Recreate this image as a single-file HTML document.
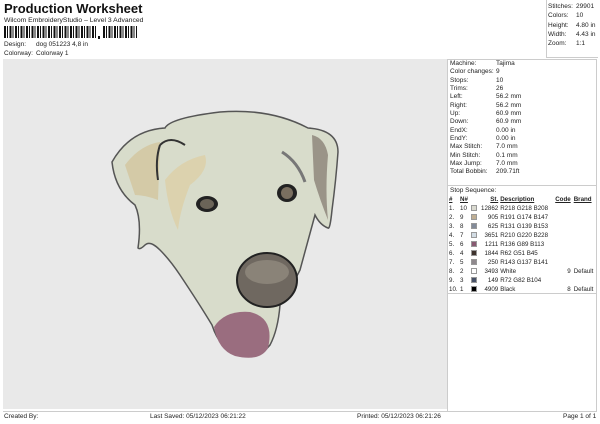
<!DOCTYPE html>
<html><head><style>
*{margin:0;padding:0;box-sizing:border-box}
body{width:600px;height:424px;background:#fff;font-family:"Liberation Sans",Arial,sans-serif;color:#222;position:relative;overflow:hidden;font-size:6.5px}
.a{position:absolute;white-space:nowrap}
.t td{font-size:6.2px;padding:0;height:9px;white-space:nowrap}
.sw{display:inline-block;width:6px;height:6px;border:1px solid #999;vertical-align:middle}
</style></head><body>
<div class="a" style="left:4px;top:1px;font-size:13px;font-weight:bold;color:#111">Production Worksheet</div>
<div class="a" style="left:4px;top:17px;font-size:6.8px">Wilcom EmbroideryStudio – Level 3 Advanced</div>
<div class="a" style="left:4px;top:26px;width:133px;height:12px;background:repeating-linear-gradient(90deg,#111 0 2px,#fff 2px 3px,#111 3px 4px,#fff 4px 5.5px)"></div>
<div class="a" style="left:96px;top:26px;width:6px;height:12px;background:#fff"></div>
<div class="a" style="left:98px;top:36px;width:1.5px;height:3px;background:#111"></div>
<div class="a" style="left:4px;top:41px">Design:</div><div class="a" style="left:36px;top:41px">dog 051223 4,8 in</div>
<div class="a" style="left:4px;top:50px">Colorway:</div><div class="a" style="left:36px;top:50px">Colorway 1</div>
<div class="a" style="left:546px;top:0;width:52px;height:58px;border-left:1px solid #ccc;border-bottom:1px solid #ccc"></div>
<div class="a" style="left:548px;top:2px;line-height:9.3px">Stitches:<br>Colors:<br>Height:<br>Width:<br>Zoom:</div>
<div class="a" style="left:576px;top:2px;line-height:9.3px">29901<br>10<br>4.80 in<br>4.43 in<br>1:1</div>
<div class="a" style="left:3px;top:59px;width:444px;height:350px;background:#e9e9e9"></div>
<div class="a" style="left:447px;top:59px;width:150px;height:353px;border:1px solid #ccc"></div>
<div class="a" style="left:447px;top:185px;width:150px;border-top:1px solid #ccc"></div>
<div class="a" style="left:447px;top:293px;width:150px;border-top:1px solid #ccc"></div>
<div class="a" style="left:450px;top:60px;line-height:8.35px">Machine:<br>Color changes:<br>Stops:<br>Trims:<br>Left:<br>Right:<br>Up:<br>Down:<br>EndX:<br>EndY:<br>Max Stitch:<br>Min Stitch:<br>Max Jump:<br>Total Bobbin:</div>
<div class="a" style="left:496px;top:60px;line-height:8.35px">Tajima<br>9<br>10<br>26<br>56.2 mm<br>56.2 mm<br>60.9 mm<br>60.9 mm<br>0.00 in<br>0.00 in<br>7.0 mm<br>0.1 mm<br>7.0 mm<br>209.71ft</div>
<div class="a" style="left:450px;top:187px">Stop Sequence:</div>
<table class="a t" style="left:449px;top:195px;border-collapse:collapse">
<tr style="font-weight:bold;text-decoration:underline"><td style="width:11px">#</td><td style="width:11px">N#</td><td style="width:10px"></td><td style="width:16px;text-align:right;padding-right:2px">St.</td><td style="width:55px">Description</td><td style="width:18px;text-align:right;padding-right:3px">Code</td><td>Brand</td></tr>
<tr><td>1.</td><td>10</td><td><i class="sw" style="background:#dadad0"></i></td><td style="text-align:right;padding-right:2px">12862</td><td>R218 G218 B208</td><td></td><td></td></tr>
<tr><td>2.</td><td>9</td><td><i class="sw" style="background:#bfae93"></i></td><td style="text-align:right;padding-right:2px">905</td><td>R191 G174 B147</td><td></td><td></td></tr>
<tr><td>3.</td><td>8</td><td><i class="sw" style="background:#838b99"></i></td><td style="text-align:right;padding-right:2px">625</td><td>R131 G139 B153</td><td></td><td></td></tr>
<tr><td>4.</td><td>7</td><td><i class="sw" style="background:#d2dce4"></i></td><td style="text-align:right;padding-right:2px">3651</td><td>R210 G220 B228</td><td></td><td></td></tr>
<tr><td>5.</td><td>6</td><td><i class="sw" style="background:#885971"></i></td><td style="text-align:right;padding-right:2px">1211</td><td>R136 G89 B113</td><td></td><td></td></tr>
<tr><td>6.</td><td>4</td><td><i class="sw" style="background:#3e332d"></i></td><td style="text-align:right;padding-right:2px">1844</td><td>R62 G51 B45</td><td></td><td></td></tr>
<tr><td>7.</td><td>5</td><td><i class="sw" style="background:#8f898d"></i></td><td style="text-align:right;padding-right:2px">250</td><td>R143 G137 B141</td><td></td><td></td></tr>
<tr><td>8.</td><td>2</td><td><i class="sw" style="background:#fff"></i></td><td style="text-align:right;padding-right:2px">3493</td><td>White</td><td style="text-align:right;padding-right:3px">9</td><td>Default</td></tr>
<tr><td>9.</td><td>3</td><td><i class="sw" style="background:#485268"></i></td><td style="text-align:right;padding-right:2px">149</td><td>R72 G82 B104</td><td></td><td></td></tr>
<tr><td>10.</td><td>1</td><td><i class="sw" style="background:#000"></i></td><td style="text-align:right;padding-right:2px">4909</td><td>Black</td><td style="text-align:right;padding-right:3px">8</td><td>Default</td></tr>
</table>
<div class="a" style="left:3px;top:411px;width:594px;border-top:1px solid #ccc"></div>
<div class="a" style="left:4px;top:413px;font-size:6.5px">Created By:</div>
<div class="a" style="left:150px;top:413px;font-size:6.5px">Last Saved: 05/12/2023 06:21:22</div>
<div class="a" style="left:357px;top:413px;font-size:6.5px">Printed: 05/12/2023 06:21:26</div>
<div class="a" style="left:563px;top:413px;font-size:6.5px">Page 1 of 1</div>
<svg class="a" style="left:100px;top:100px" width="250" height="270" viewBox="0 0 250 270">
<path d="M12 62 Q30 30 65 28 Q70 18 120 12 Q170 8 208 28 Q238 30 238 52 Q236 80 232 110 Q230 130 228 128 Q220 125 215 115 L200 170 Q190 190 180 205 Q178 230 170 245 Q160 258 140 256 Q120 250 112 225 Q100 205 80 175 Q70 160 60 150 Q50 140 45 145 Q40 150 38 148 Q42 120 35 105 Q15 90 12 62Z" fill="#d8dccb" stroke="#555" stroke-width="1.5"/>
<path d="M25 65 Q40 45 60 42 L58 100 Q45 95 35 95 Z" fill="#d4caa7"/>
<path d="M65 80 Q80 60 105 55 Q110 70 90 85 Q80 110 78 130 Q68 110 65 80Z" fill="#dcd2ae"/>
<path d="M212 35 Q225 38 228 55 Q225 90 228 120 Q220 100 214 80 Z" fill="#9a9488"/>
<path d="M60 45 Q70 35 85 45" stroke="#333" stroke-width="2" fill="none"/>
<path d="M60 45 Q55 60 58 80" stroke="#333" stroke-width="2" fill="none"/>
<path d="M182 52 Q198 62 205 82" stroke="#777" stroke-width="3" fill="none"/>
<path d="M114 227 Q125 210 150 212 Q175 218 168 248 Q160 262 135 256 Q118 250 114 227Z" fill="#9a6d7f"/>
<ellipse cx="167" cy="180" rx="30" ry="27" fill="#6f6860" stroke="#222" stroke-width="2"/>
<ellipse cx="167" cy="172" rx="22" ry="12" fill="#8a8378"/>
<ellipse cx="107" cy="104" rx="11" ry="8" fill="#222"/><ellipse cx="107" cy="104" rx="7" ry="5" fill="#6b6458"/>
<ellipse cx="187" cy="93" rx="10" ry="9" fill="#222"/><ellipse cx="187" cy="93" rx="6" ry="6" fill="#7a6f60"/>
</svg>
</body></html>
